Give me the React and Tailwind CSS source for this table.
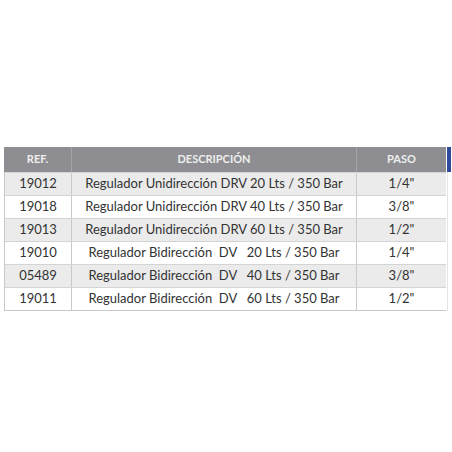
import React from "react";

const rows = [
  ["19012", "Regulador Unidirección DRV 20 Lts / 350 Bar", "1/4\""],
  ["19018", "Regulador Unidirección DRV 40 Lts / 350 Bar", "3/8\""],
  ["19013", "Regulador Unidirección DRV 60 Lts / 350 Bar", "1/2\""],
  ["19010", "Regulador Bidirección  DV   20 Lts / 350 Bar", "1/4\""],
  ["05489", "Regulador Bidirección  DV   40 Lts / 350 Bar", "3/8\""],
  ["19011", "Regulador Bidirección  DV   60 Lts / 350 Bar", "1/2\""],
];

export default function App() {
  return (
    <div
      className="w-[452px] h-[452px] bg-white pt-[147px] pl-[4px] flex"
      style={{ fontFamily: "Lato, 'Open Sans', sans-serif" }}
    >
      <div className="w-[442px]">
        <div className="flex h-[25px] bg-[#8e8e92] text-[#eeeeee] font-bold text-[11px] items-center">
          <div className="w-[68px] text-center border-r border-[#a4a4a8] h-full flex items-center justify-center">REF.</div>
          <div className="w-[285px] text-center border-r border-[#a4a4a8] h-full flex items-center justify-center">DESCRIPCIÓN</div>
          <div className="flex-1 text-center h-full flex items-center justify-center">PASO</div>
        </div>
        <div className="border-l border-b border-[#c9c9c9] text-[#333333] text-[13px]">
          {rows.map((r, i) => (
            <div
              key={i}
              className={`flex h-[23px] items-center border-t border-[#d4d4d4] ${i % 2 === 0 ? "bg-[#ebebeb]" : "bg-white"}`}
            >
              <div className="w-[67px] text-center border-r border-[#c9c9c9] h-full flex items-center justify-center">{r[0]}</div>
              <div className="w-[285px] text-center border-r border-[#c9c9c9] h-full flex items-center justify-center whitespace-pre">{r[1]}</div>
              <div className="flex-1 h-full flex items-center justify-center">{r[2]}</div>
            </div>
          ))}
        </div>
      </div>
      <div className="ml-[1px] w-[4px] flex flex-col">
        <div className="h-[25px] bg-[#2f4a9c]" />
        <div className="h-[139px] border-l border-[#e4e4e4]" />
      </div>
    </div>
  );
}
